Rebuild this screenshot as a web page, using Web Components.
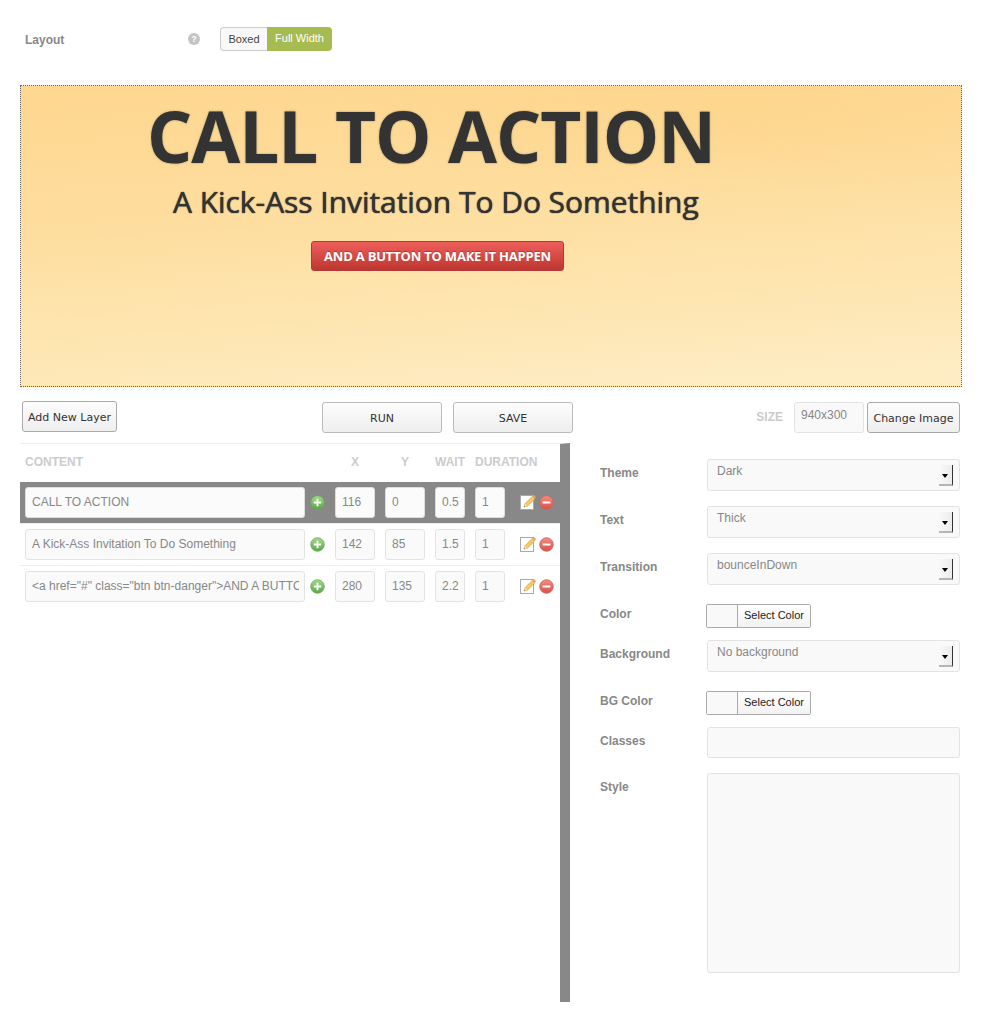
<!DOCTYPE html>
<html lang="en">
<head>
<meta charset="utf-8">
<title>Slider editor</title>
<style>
  html,body{margin:0;padding:0;background:#fff}
  body{font-family:"Liberation Sans",Arial,sans-serif;width:996px;height:1027px;overflow:hidden}
  .panels{display:flex;align-items:flex-start;margin-top:10px}
</style>
</head>
<body>
<sl-layout-bar></sl-layout-bar>
<sl-stage>
  <sl-stage-layer x="126" y="7" kind="thick">CALL TO ACTION</sl-stage-layer>
  <sl-stage-layer x="152" y="96" kind="sub">A Kick-Ass Invitation To Do Something</sl-stage-layer>
  <sl-stage-layer x="290" y="155" kind="btn">AND A BUTTON TO MAKE IT HAPPEN</sl-stage-layer>
</sl-stage>
<sl-toolbar></sl-toolbar>
<div class="panels">
  <sl-layer-table>
    <sl-layer-row active content="CALL TO ACTION" x="116" y="0" wait="0.5" dur="1"></sl-layer-row>
    <sl-layer-row content="A Kick-Ass Invitation To Do Something" x="142" y="85" wait="1.5" dur="1"></sl-layer-row>
    <sl-layer-row last content='&lt;a href="#" class="btn btn-danger"&gt;AND A BUTTO' x="280" y="135" wait="2.2" dur="1"></sl-layer-row>
  </sl-layer-table>
  <sl-props>
    <sl-field label="Theme"><sl-select value="Dark"></sl-select></sl-field>
    <sl-field label="Text"><sl-select value="Thick"></sl-select></sl-field>
    <sl-field label="Transition"><sl-select value="bounceInDown"></sl-select></sl-field>
    <sl-field label="Color" compact><sl-color></sl-color></sl-field>
    <sl-field label="Background"><sl-select value="No background"></sl-select></sl-field>
    <sl-field label="BG Color" compact><sl-color></sl-color></sl-field>
    <sl-field label="Classes"><sl-text-box></sl-text-box></sl-field>
    <sl-field label="Style"><sl-text-box tall></sl-text-box></sl-field>
  </sl-props>
</div>

<script>
const PLUS_ICON = `<svg width="15" height="15" viewBox="0 0 15 15"><defs><linearGradient id="g" x1="0" y1="0" x2="0" y2="1"><stop offset="0" stop-color="#a4d98c"/><stop offset="1" stop-color="#58a846"/></linearGradient></defs><circle cx="7.5" cy="7.5" r="6.8" fill="url(#g)" stroke="#6aa95c" stroke-width=".8"/><path d="M7.5 3.8v7.4M3.8 7.5h7.4" stroke="#fff" stroke-width="1.9"/></svg>`;
const MINUS_ICON = `<svg width="15" height="15" viewBox="0 0 15 15"><defs><linearGradient id="r" x1="0" y1="0" x2="0" y2="1"><stop offset="0" stop-color="#f28d84"/><stop offset="1" stop-color="#dc4f47"/></linearGradient></defs><circle cx="7.5" cy="7.5" r="6.8" fill="url(#r)" stroke="#cf6259" stroke-width=".8"/><path d="M3.6 7.5h7.8" stroke="#fff" stroke-width="2"/></svg>`;
const EDIT_ICON = `<svg width="16" height="16" viewBox="0 0 16 16"><rect x=".5" y="1.5" width="13" height="14" fill="#fff" stroke="#aaa"/><path d="M4 13l1-3.2L12.4 2.2l2.6 2.4L7.4 12.2z" fill="#f5cb68" stroke="#d39c3a" stroke-width=".7"/><path d="M12.4 2.2l2.6 2.4 .7-.9c.3-.4 .2-.9-.1-1.2l-1.2-1.1c-.4-.3-.9-.3-1.2 0z" fill="#eb9a80"/><path d="M4 13l1-3.2 2.4 2.4z" fill="#f6dfae"/><path d="M4 13l.35-1.1 .8 .8z" fill="#555"/></svg>`;

class SlLayoutBar extends HTMLElement {
  constructor() { super(); this.attachShadow({ mode: "open" }); }
  connectedCallback() {
    this.shadowRoot.innerHTML = `
      <style>
        :host{display:flex;align-items:flex-start;padding:27px 0 0 25px;height:24px}
        .label{width:163px;font:bold 12px/26px "Liberation Sans",Arial,sans-serif;color:#888}
        .help{width:12px;height:12px;margin-top:6px;border-radius:50%;background:#c4c4c4;color:#fff;font:bold 9px/12px "Liberation Sans",Arial,sans-serif;text-align:center}
        .toggle{display:flex;margin-left:20px;height:24px;font:11px/22px "Liberation Sans",Arial,sans-serif}
        .off{box-sizing:border-box;width:47px;text-align:center;background:#f9f9f9;color:#444;border:1px solid #ccc;border-right:0;border-radius:4px 0 0 4px}
        .on{box-sizing:border-box;width:65px;text-align:center;background:#a6bb50;color:#fff;border-radius:0 4px 4px 0;line-height:22px}
      </style>
      <div class="label">Layout</div>
      <div class="help">?</div>
      <div class="toggle"><div class="off">Boxed</div><div class="on">Full Width</div></div>`;
  }
}

class SlStage extends HTMLElement {
  constructor() { super(); this.attachShadow({ mode: "open" }); }
  connectedCallback() {
    this.shadowRoot.innerHTML = `
      <style>
        :host{display:block;box-sizing:border-box;position:relative;margin:34px 0 0 20px;width:942px;height:302px;border:1px dotted #666;overflow:hidden;
          background:
            radial-gradient(ellipse 420px 80px at 720px 25px,rgba(253,212,135,.55),rgba(253,212,135,0)),
            linear-gradient(176deg,#fed78f 0%,#fedc9c 35%,#fee4ad 65%,#feedc6 100%)}
      </style>
      <slot></slot>`;
  }
}

class SlStageLayer extends HTMLElement {
  constructor() { super(); this.attachShadow({ mode: "open" }); }
  connectedCallback() {
    const kind = this.getAttribute("kind");
    this.shadowRoot.innerHTML = `
      <style>
        :host{display:block;position:absolute;left:${this.getAttribute("x")}px;top:${this.getAttribute("y")}px;white-space:nowrap;font-family:"Open Sans","Liberation Sans",sans-serif}
        .thick{font-weight:700;font-size:71px;letter-spacing:-1px;line-height:86px;color:#333;text-shadow:0 0 2px rgba(60,60,60,.5)}
        .sub{font-weight:400;font-size:30px;letter-spacing:-.05px;line-height:40px;color:#333;text-shadow:0 0 1px rgba(40,40,40,.9),0 0 1px rgba(40,40,40,.6)}
        .btn{box-sizing:border-box;height:30px;padding:0 12px;font-weight:700;font-size:13px;letter-spacing:-.2px;line-height:28px;color:#fff;border-radius:3px;border:1px solid #b23a34;
          background:linear-gradient(#ee5f5b,#bd362f);text-shadow:0 -1px 0 rgba(0,0,0,.25)}
      </style>
      <div class="${kind}"><slot></slot></div>`;
  }
}

class SlButton extends HTMLElement {
  constructor() { super(); this.attachShadow({ mode: "open" }); }
  connectedCallback() {
    this.shadowRoot.innerHTML = `
      <style>
        :host{display:block;box-sizing:border-box;height:31px;border:1px solid #bbb;border-radius:3px;background:linear-gradient(#fdfdfd,#eeeeee);
          font:11px/32px "DejaVu Sans",Verdana,sans-serif;color:#333;text-align:center;white-space:nowrap}
      </style>
      <slot></slot>`;
  }
}

class SlToolbar extends HTMLElement {
  constructor() { super(); this.attachShadow({ mode: "open" }); }
  connectedCallback() {
    this.shadowRoot.innerHTML = `
      <style>
        :host{display:flex;align-items:flex-start;margin:15px 36px 0 22px;height:31px}
        .add{width:95px;margin-top:-1px;border-color:#aaa}
        .run{width:120px;margin-left:205px}
        .save{width:120px;margin-left:11px}
        .end{margin-left:auto;display:flex;align-items:flex-start}
        .size{font:bold 12px/31px "Liberation Sans",Arial,sans-serif;color:#ccc;margin-right:11px}
        .dims{box-sizing:border-box;width:70px;height:31px;padding-left:6px;border:1px solid #e3e3e3;border-radius:3px;background:#f9f9f9;font:12px/25px "Liberation Sans",Arial,sans-serif;color:#888}
        .change{width:93px;margin-left:3px;border-color:#aaa}
      </style>
      <sl-button class="add">Add New Layer</sl-button>
      <sl-button class="run">RUN</sl-button>
      <sl-button class="save">SAVE</sl-button>
      <div class="end">
        <div class="size">SIZE</div>
        <div class="dims">940x300</div>
        <sl-button class="change">Change Image</sl-button>
      </div>`;
  }
}

const ROW_COLUMNS = "280px 30px 50px 50px 40px 45px 20px 20px";

class SlLayerTable extends HTMLElement {
  constructor() { super(); this.attachShadow({ mode: "open" }); }
  connectedCallback() {
    this.shadowRoot.innerHTML = `
      <style>
        :host{display:block;box-sizing:border-box;margin-left:20px;width:550px;height:559px;border-right:10px solid #888;border-top:1px solid #eee}
        .head{display:grid;grid-template-columns:${ROW_COLUMNS};box-sizing:border-box;height:38px;padding:0 0 2px 5px;align-items:center;
          font:bold 12px "Liberation Sans",Arial,sans-serif;color:#ccc}
        .mid{width:40px;text-align:center}
        .nar{width:30px;text-align:center;white-space:nowrap}
        .dur{white-space:nowrap}
      </style>
      <div class="head">
        <div>CONTENT</div><div></div>
        <div class="mid">X</div><div class="mid">Y</div>
        <div class="nar">WAIT</div><div class="dur">DURATION</div>
      </div>
      <slot></slot>`;
  }
}

class SlLayerRow extends HTMLElement {
  constructor() { super(); this.attachShadow({ mode: "open" }); }
  connectedCallback() {
    const a = n => this.getAttribute(n);
    this.shadowRoot.innerHTML = `
      <style>
        :host{display:grid;grid-template-columns:${ROW_COLUMNS};box-sizing:border-box;height:42px;padding:5px 0 0 5px;border-bottom:1px solid #eee;align-items:start}
        :host([active]){background:#888}
        :host([last]){border-bottom:0}
        .box{box-sizing:border-box;height:31px;padding:0 6px;border:1px solid #e3e3e3;border-radius:3px;background:#fafafa;
          font:12px/29px "Liberation Sans",Arial,sans-serif;color:#888;white-space:nowrap;overflow:hidden}
        :host([active]) .box{background:#fbfbfb;border-color:#ddd}
        .main{padding:0 5px 0 6px;width:280px}
        .main span{display:block;overflow:hidden}
        .icon{height:31px;display:flex;align-items:center}
        .plus{padding-left:5px}
        .edit svg{margin-top:-1px}
        .minus{margin-left:-1px}
      </style>
      <div class="box main"><span id="content"></span></div>
      <div class="icon plus">${PLUS_ICON}</div>
      <div class="box" style="width:40px">${a("x")}</div>
      <div class="box" style="width:40px">${a("y")}</div>
      <div class="box" style="width:30px">${a("wait")}</div>
      <div class="box" style="width:30px">${a("dur")}</div>
      <div class="icon edit">${EDIT_ICON}</div>
      <div class="icon minus">${MINUS_ICON}</div>`;
    this.shadowRoot.getElementById("content").textContent = a("content");
  }
}

class SlProps extends HTMLElement {
  constructor() { super(); this.attachShadow({ mode: "open" }); }
  connectedCallback() {
    this.shadowRoot.innerHTML = `
      <style>:host{display:block;padding:16px 0 0 30px;width:360px}</style>
      <slot></slot>`;
  }
}

class SlField extends HTMLElement {
  constructor() { super(); this.attachShadow({ mode: "open" }); }
  connectedCallback() {
    this.shadowRoot.innerHTML = `
      <style>
        :host{display:grid;grid-template-columns:107px 253px;align-items:start}
        .label{font:bold 12px/28px "Liberation Sans",Arial,sans-serif;color:#888}
        :host([compact]) .label{line-height:20px;margin-top:4px}
      </style>
      <div class="label"></div>
      <div><slot></slot></div>`;
    this.shadowRoot.querySelector(".label").textContent = this.getAttribute("label");
  }
}

class SlSelect extends HTMLElement {
  constructor() { super(); this.attachShadow({ mode: "open" }); }
  connectedCallback() {
    this.shadowRoot.innerHTML = `
      <style>
        :host{display:block;box-sizing:border-box;position:relative;height:32px;margin-bottom:15px;padding-left:9px;border:1px solid #e3e3e3;border-radius:3px;background:#f9f9f9;
          font:12px/22px "Liberation Sans",Arial,sans-serif;color:#888}
        .arrow{position:absolute;right:6px;top:5px;width:14px;height:21px;box-sizing:border-box;border-right:1px solid #333;border-bottom:2px solid #b5b5b5;background:linear-gradient(90deg,#f9f9f9,#ececec)}
        .arrow::after{content:"";position:absolute;left:3px;top:9px;border:3px solid transparent;border-top:4px solid #000;border-bottom:0}
      </style>
      <span></span><div class="arrow"></div>`;
    this.shadowRoot.querySelector("span").textContent = this.getAttribute("value");
  }
}

class SlColor extends HTMLElement {
  constructor() { super(); this.attachShadow({ mode: "open" }); }
  connectedCallback() {
    this.shadowRoot.innerHTML = `
      <style>
        :host{display:flex;box-sizing:border-box;width:105px;height:24px;margin:4px 0 12px -1px;border:1px solid #aaa;border-radius:2px;background:#fff;
          font:11px/21px "Liberation Sans",Arial,sans-serif;color:#222}
        .swatch{box-sizing:border-box;width:31px;background:#f9f9f9;border-right:1px solid #aaa}
        .txt{flex:1;text-align:center;background:linear-gradient(#fff,#f2f2f2)}
      </style>
      <div class="swatch"></div><div class="txt">Select Color</div>`;
  }
}

class SlTextBox extends HTMLElement {
  constructor() { super(); this.attachShadow({ mode: "open" }); }
  connectedCallback() {
    this.shadowRoot.innerHTML = `
      <style>
        :host{display:block;box-sizing:border-box;height:31px;margin-bottom:15px;border:1px solid #e3e3e3;border-radius:3px;background:#f9f9f9}
        :host([tall]){height:200px}
      </style>`;
  }
}

customElements.define("sl-layout-bar", SlLayoutBar);
customElements.define("sl-stage", SlStage);
customElements.define("sl-stage-layer", SlStageLayer);
customElements.define("sl-button", SlButton);
customElements.define("sl-toolbar", SlToolbar);
customElements.define("sl-layer-table", SlLayerTable);
customElements.define("sl-layer-row", SlLayerRow);
customElements.define("sl-props", SlProps);
customElements.define("sl-field", SlField);
customElements.define("sl-select", SlSelect);
customElements.define("sl-color", SlColor);
customElements.define("sl-text-box", SlTextBox);
</script>
</body>
</html>
